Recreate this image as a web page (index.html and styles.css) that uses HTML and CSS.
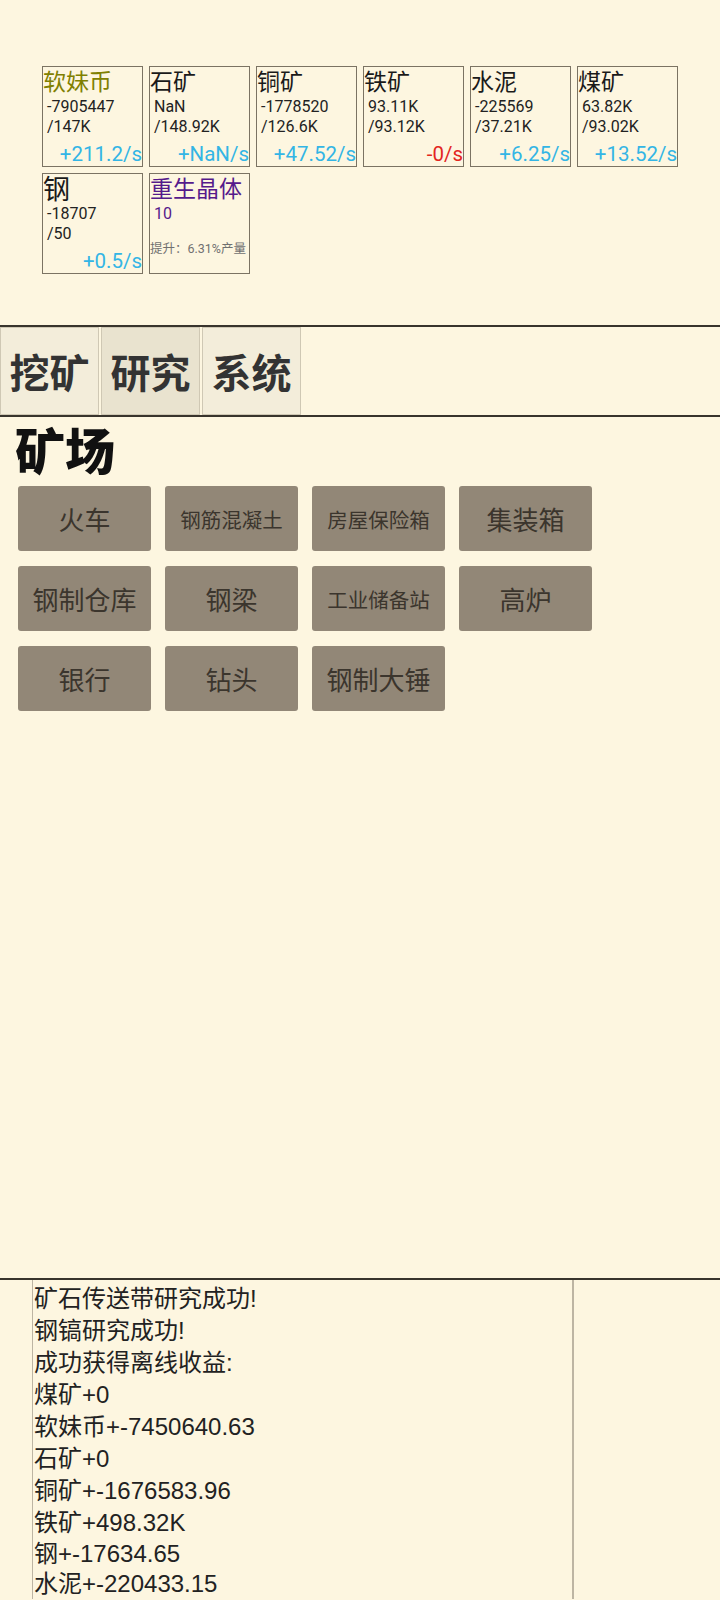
FILE: index.html
```html
<!DOCTYPE html>
<html lang="zh-CN">
<head>
    <meta charset="UTF-8">
    <meta name="viewport" content="width=device-width, initial-scale=1.0">
    <title>挖矿</title>
    <link rel="stylesheet" href="styles.css">
</head>
<body>
    <!-- Resource cards -->
    <div class="top">
        <div class="res-grid">
            <div class="res">
                <div class="res-name coin">软妹币</div>
                <div class="res-num">-7905447</div>
                <div class="res-num">/147K</div>
                <div class="res-rate">+211.2/s</div>
            </div>
            <div class="res">
                <div class="res-name">石矿</div>
                <div class="res-num">NaN</div>
                <div class="res-num">/148.92K</div>
                <div class="res-rate">+NaN/s</div>
            </div>
            <div class="res">
                <div class="res-name">铜矿</div>
                <div class="res-num">-1778520</div>
                <div class="res-num">/126.6K</div>
                <div class="res-rate">+47.52/s</div>
            </div>
            <div class="res">
                <div class="res-name">铁矿</div>
                <div class="res-num">93.11K</div>
                <div class="res-num">/93.12K</div>
                <div class="res-rate minus">-0/s</div>
            </div>
            <div class="res">
                <div class="res-name">水泥</div>
                <div class="res-num">-225569</div>
                <div class="res-num">/37.21K</div>
                <div class="res-rate">+6.25/s</div>
            </div>
            <div class="res">
                <div class="res-name">煤矿</div>
                <div class="res-num">63.82K</div>
                <div class="res-num">/93.02K</div>
                <div class="res-rate">+13.52/s</div>
            </div>
            <div class="res">
                <div class="res-name big">钢</div>
                <div class="res-num">-18707</div>
                <div class="res-num">/50</div>
                <div class="res-rate">+0.5/s</div>
            </div>
            <div class="res">
                <div class="res-name crystal">重生晶体</div>
                <div class="res-num crystal">10</div>
                <div class="res-bonus">提升：6.31%产量</div>
            </div>
        </div>
    </div>

    <!-- Tabs -->
    <div class="tabs">
        <div class="tab">挖矿</div>
        <div class="tab active">研究</div>
        <div class="tab">系统</div>
    </div>

    <!-- Research panel -->
    <div class="panel">
        <h2>矿场</h2>
        <div class="btn-grid">
            <div class="btn">火车</div>
            <div class="btn small">钢筋混凝土</div>
            <div class="btn small">房屋保险箱</div>
            <div class="btn">集装箱</div>
            <div class="btn">钢制仓库</div>
            <div class="btn">钢梁</div>
            <div class="btn small">工业储备站</div>
            <div class="btn">高炉</div>
            <div class="btn">银行</div>
            <div class="btn">钻头</div>
            <div class="btn">钢制大锤</div>
        </div>
    </div>

    <!-- Message log -->
    <div class="log">
        <div class="log-box">
            <div class="log-line">矿石传送带研究成功!</div>
            <div class="log-line">钢镐研究成功!</div>
            <div class="log-line">成功获得离线收益:</div>
            <div class="log-line">煤矿+0</div>
            <div class="log-line">软妹币+-7450640.63</div>
            <div class="log-line">石矿+0</div>
            <div class="log-line">铜矿+-1676583.96</div>
            <div class="log-line">铁矿+498.32K</div>
            <div class="log-line tight">钢+-17634.65</div>
            <div class="log-line tight">水泥+-220433.15</div>
        </div>
    </div>
</body>
</html>
```

FILE: styles.css
```css
body {
    margin: 0;
    padding: 0;
    background-color: #fdf6e0;
    font-family: Roboto, "Noto Sans CJK SC", sans-serif;
    color: #1a1a1a;
    overflow: hidden;
}
.top {
    height: 325px;
    padding-top: 66px;
    box-sizing: border-box;
}
.res-grid {
    width: 636px;
    margin: 0 auto;
    display: flex;
    flex-wrap: wrap;
    gap: 6px;
}
.res {
    width: 101px;
    height: 101px;
    box-sizing: border-box;
    border: 1px solid #7b7363;
    display: flex;
    flex-direction: column;
    overflow: hidden;
}
.res-name {
    font-size: 23px;
    line-height: 28px;
    padding-top: 2px;
    white-space: nowrap;
}
.res-name.big {
    font-size: 27px;
}
.coin {
    color: #808000;
}
.crystal {
    color: #551a8b;
}
.res-num {
    font-size: 16px;
    line-height: 20px;
    padding-left: 4px;
    color: #222;
}
.res-num.crystal {
    color: #551a8b;
}
.res-rate {
    margin-top: auto;
    font-size: 20.5px;
    line-height: 24px;
    text-align: right;
    color: #33b5e5;
    white-space: nowrap;
}
.res-rate.minus {
    color: #e3261f;
}
.res-bonus {
    margin-top: 17px;
    font-size: 12.5px;
    line-height: 16px;
    color: #707070;
    white-space: nowrap;
}
.tabs {
    display: flex;
    gap: 2px;
    height: 92px;
    box-sizing: border-box;
    border-top: 2px solid #38342c;
    border-bottom: 2px solid #38342c;
}
.tab {
    width: 99px;
    box-sizing: border-box;
    border: 1px solid #cfc8b4;
    background: #f3edda;
    display: flex;
    align-items: center;
    justify-content: center;
    font-size: 40px;
    font-weight: bold;
    color: #333;
}
.tab.active {
    background: #e9e3cf;
}
.panel {
    height: 861px;
    box-sizing: border-box;
    padding-top: 11px;
}
.panel h2 {
    margin: 0 0 8px 15px;
    font-size: 50px;
    line-height: 50px;
    font-weight: 900;
    color: #111;
}
.btn-grid {
    display: grid;
    grid-template-columns: repeat(4, 133px);
    grid-auto-rows: 65px;
    gap: 15px 14px;
    padding-left: 18px;
}
.btn {
    background: #928777;
    border-radius: 3px;
    display: flex;
    align-items: center;
    justify-content: center;
    font-size: 26px;
    color: #3b352d;
    white-space: nowrap;
}
.btn.small {
    font-size: 20.5px;
}
.log {
    border-top: 2px solid #38342c;
}
.log-box {
    margin-left: 32px;
    width: 542px;
    box-sizing: border-box;
    border-left: 1px solid #bdb5a3;
    border-right: 2px solid #bdb5a3;
    padding: 3px 0 0 1px;
    font-family: "Liberation Sans", "Noto Sans CJK SC", sans-serif;
    font-size: 24px;
    color: #222;
}
.log-line {
    line-height: 32px;
    white-space: nowrap;
}
.log-line.tight {
    line-height: 30px;
}
```
